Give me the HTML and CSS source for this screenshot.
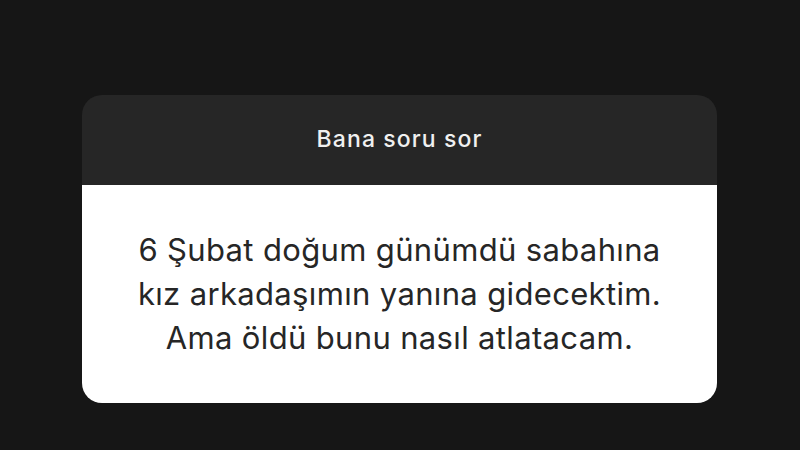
FILE: index.html
```html
<!DOCTYPE html>
<html lang="tr">
<head>
    <meta charset="UTF-8">
    <meta name="viewport" content="width=device-width, initial-scale=1.0">
    <title>Bana soru sor</title>
    <link rel="stylesheet" href="styles.css">
</head>
<body>
    <div class="question-card">
        <div class="card-header">Bana soru sor</div>
        <div class="card-body">
            <p class="answer">6 Şubat doğum günümdü sabahına<br>kız arkadaşımın yanına gidecektim.<br>Ama öldü bunu nasıl atlatacam.</p>
        </div>
    </div>
</body>
</html>
```

FILE: styles.css
```css
body {
    font-family: Inter, Roboto, "Noto Sans", sans-serif;
    background-color: #161616;
    margin: 0;
    width: 800px;
    height: 450px;
    display: flex;
    justify-content: center;
    align-items: flex-start;
    padding-top: 95px;
    box-sizing: border-box;
    overflow: hidden;
}
.question-card {
    width: 635px;
    border-radius: 20px;
    overflow: hidden;
    margin-left: -1px;
}
.card-header {
    background-color: #262626;
    color: #f0f0f0;
    height: 90px;
    display: flex;
    align-items: center;
    justify-content: center;
    font-size: 23px;
    font-weight: 500;
    letter-spacing: 1.1px;
    padding-bottom: 2px;
    box-sizing: border-box;
}
.card-body {
    background: white;
    height: 218px;
    display: flex;
    align-items: center;
    justify-content: center;
}
.answer {
    margin: 0;
    text-align: center;
    color: #262626;
    font-size: 31px;
    letter-spacing: 0.35px;
    line-height: 44px;
}
```
